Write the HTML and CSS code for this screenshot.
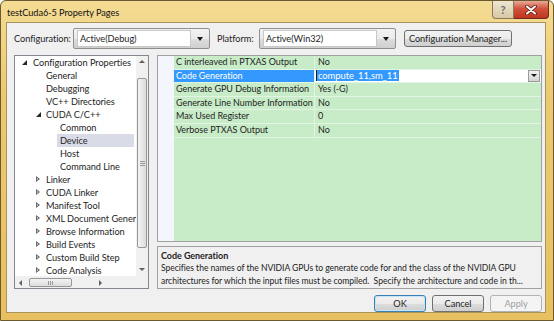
FILE: index.html
```html
<!DOCTYPE html>
<html lang="en">
<head>
  <meta charset="UTF-8">
  <title>testCuda6-5 Property Pages</title>
  <link rel="stylesheet" href="styles.css">
</head>
<body>
  <div class="window">
    <div class="titlebar">
      <span class="title">testCuda6-5 Property Pages</span>
      <div class="caption-btns">
        <div class="cap-help">?</div>
        <div class="cap-close">
          <svg width="14" height="10" viewBox="0 0 14 10"><path d="M3 1.5 L11 8.5 M11 1.5 L3 8.5" stroke="#5a1a10" stroke-width="3.6" stroke-linecap="round"/><path d="M3 1.5 L11 8.5 M11 1.5 L3 8.5" stroke="#fff" stroke-width="2" stroke-linecap="round"/></svg>
        </div>
      </div>
    </div>

    <div class="client">
      <div class="toolbar">
        <span class="lbl">Configuration:</span>
        <div class="combo combo-config"><span>Active(Debug)</span><i class="arrow"></i></div>
        <span class="lbl lbl-platform">Platform:</span>
        <div class="combo combo-platform"><span>Active(Win32)</span><i class="arrow"></i></div>
        <div class="btn btn-manager">Configuration Manager...</div>
      </div>

      <div class="main">
        <div class="tree">
          <div class="tree-body">
            <ul class="tree-list">
              <li class="lv0"><i class="exp"></i>Configuration Properties</li>
              <li class="lv1">General</li>
              <li class="lv1">Debugging</li>
              <li class="lv1">VC++ Directories</li>
              <li class="lv1 node"><i class="exp"></i>CUDA C/C++</li>
              <li class="lv2">Common</li>
              <li class="lv2 sel">Device</li>
              <li class="lv2">Host</li>
              <li class="lv2">Command Line</li>
              <li class="lv1 node"><i class="col"></i>Linker</li>
              <li class="lv1 node"><i class="col"></i>CUDA Linker</li>
              <li class="lv1 node"><i class="col"></i>Manifest Tool</li>
              <li class="lv1 node"><i class="col"></i>XML Document Generator Tool</li>
              <li class="lv1 node"><i class="col"></i>Browse Information</li>
              <li class="lv1 node"><i class="col"></i>Build Events</li>
              <li class="lv1 node"><i class="col"></i>Custom Build Step</li>
              <li class="lv1 node"><i class="col"></i>Code Analysis</li>
            </ul>
            <div class="vscroll">
              <div class="sb-arrow up"></div>
              <div class="vtrack"><div class="vthumb"><span class="grip"></span></div></div>
              <div class="sb-arrow down"></div>
            </div>
          </div>
          <div class="hscroll">
            <div class="sb-arrow left"></div>
            <div class="htrack"><div class="hthumb"><span class="hgrip"></span></div></div>
            <div class="sb-arrow right"></div>
            <div class="corner"></div>
          </div>
        </div>

        <div class="right">
          <div class="grid">
            <div class="margin"></div>
            <div class="rows">
              <div class="row"><div class="name">C interleaved in PTXAS Output</div><div class="val">No</div></div>
              <div class="row sel"><div class="name">Code Generation</div><div class="val edit"><span class="hl">compute_11,sm_11</span><div class="drop"><i class="arrow"></i></div></div></div>
              <div class="row"><div class="name">Generate GPU Debug Information</div><div class="val">Yes (-G)</div></div>
              <div class="row"><div class="name">Generate Line Number Information</div><div class="val">No</div></div>
              <div class="row"><div class="name">Max Used Register</div><div class="val">0</div></div>
              <div class="row"><div class="name">Verbose PTXAS Output</div><div class="val">No</div></div>
            </div>
          </div>
          <div class="desc">
            <div class="desc-title">Code Generation</div>
            <div class="desc-text">Specifies the names of the NVIDIA GPUs to generate code for and the class of the NVIDIA GPU</div>
            <div class="desc-text">architectures for which the input files must be compiled.&nbsp; Specify the architecture and code in th...</div>
          </div>
        </div>
      </div>

      <div class="buttons">
        <div class="btn btn-ok">OK</div>
        <div class="btn">Cancel</div>
        <div class="btn disabled">Apply</div>
      </div>
    </div>
  </div>
</body>
</html>
```

FILE: styles.css
```css
* {
  margin: 0;
  padding: 0;
  box-sizing: border-box;
}

body {
  font-family: Lato, "Open Sans", sans-serif;
  font-size: 9px;
  letter-spacing: -0.05px;
  color: #1e1e1e;
  background: #fff;
}

.window {
  width: 554px;
  height: 321px;
  background: linear-gradient(180deg, #f4dc94 0%, #ecc970 30%, #e8c060 100%);
  border: 1px solid #6b5a2e;
  border-radius: 6px 6px 0 0;
  padding: 0 7px 7px 5px;
  display: flex;
  flex-direction: column;
}

.titlebar {
  height: 21px;
  display: flex;
  align-items: flex-start;
  justify-content: space-between;
}

.title {
  padding: 6px 0 0 1px;
  font-size: 9.2px;
  color: #111;
}

.caption-btns {
  display: flex;
  margin-right: -3px;
}

.cap-help {
  width: 22px;
  height: 18px;
  border: 1px solid #8a7a5a;
  border-top: none;
  border-radius: 0 0 0 4px;
  background: linear-gradient(180deg, #efe6d0, #d6c8a4);
  color: #6a6a6a;
  font-weight: bold;
  font-size: 11px;
  text-align: center;
  line-height: 17px;
}

.cap-close {
  width: 35px;
  height: 18px;
  border: 1px solid #6e2a20;
  border-top: none;
  border-left: none;
  border-radius: 0 0 4px 0;
  background: linear-gradient(180deg, #e9a99a 0%, #d0523c 45%, #c0361f 100%);
  display: flex;
  justify-content: center;
  align-items: center;
}

.client {
  flex: 1;
  background: #f0f0f0;
  border: 1px solid #a8945c;
  display: flex;
  flex-direction: column;
  padding: 5px 3px 0 7px;
}

.toolbar {
  display: flex;
  align-items: center;
  height: 21px;
}

.lbl {
  width: 59px;
  font-size: 9.2px;
}

.lbl-platform {
  width: 42px;
  margin-left: 7px;
}

.combo {
  height: 21px;
  border: 1px solid #8f8f8f;
  border-radius: 2px;
  background: linear-gradient(180deg, #f2f2f2 0%, #ebebeb 50%, #dddddd 51%, #cfcfcf 100%);
  display: flex;
  align-items: center;
  justify-content: space-between;
  padding: 0 6px 0 3px;
  font-size: 9.2px;
}

.combo span {
  background: #fff;
  border: 1px solid #c8c8c8;
  padding: 0 2px;
  line-height: 15px;
  flex: 1;
  margin-right: 6px;
}

.combo-config {
  width: 137px;
}

.combo-platform {
  width: 137px;
}

.arrow {
  display: block;
  width: 0;
  height: 0;
  border-left: 3.5px solid transparent;
  border-right: 3.5px solid transparent;
  border-top: 4px solid #1a1a1a;
}

.btn {
  height: 17px;
  border: 1px solid #707070;
  border-radius: 3px;
  background: linear-gradient(180deg, #f2f2f2 0%, #ebebeb 50%, #dddddd 51%, #cfcfcf 100%);
  display: flex;
  align-items: center;
  justify-content: center;
  width: 52px;
  font-size: 9.2px;
}

.btn-manager {
  width: 108px;
  margin-left: 8px;
}

.main {
  display: flex;
  margin-top: 6px;
  height: 234px;
  gap: 8px;
}

.tree {
  width: 135px;
  border: 1px solid #828790;
  background: #fff;
  display: flex;
  flex-direction: column;
}

.tree-body {
  flex: 1;
  display: flex;
  overflow: hidden;
}

.tree-list {
  list-style: none;
  flex: 1;
  overflow: hidden;
  white-space: nowrap;
  font-size: 9.2px;
}

.tree-list li {
  height: 13px;
  line-height: 13px;
  position: relative;
}

.lv0 {
  padding-left: 18px;
}

.lv1 {
  padding-left: 31px;
}

.lv2 {
  padding-left: 45px;
}

.tree-list li.sel {
  background: #d9dce6;
  margin-left: 42px;
  padding-left: 3px;
  margin-right: 2px;
}

.exp, .col {
  position: absolute;
  top: 4px;
}

.lv0 .exp {
  left: 7px;
}

.lv1 .exp, .lv1 .col {
  left: 21px;
}

.exp {
  width: 0;
  height: 0;
  border-left: 5px solid transparent;
  border-bottom: 5px solid #262626;
}

.col {
  width: 0;
  height: 0;
  border-top: 3.5px solid transparent;
  border-bottom: 3.5px solid transparent;
  border-left: 4px solid #6a6a6a;
  top: 3px;
}

.col::after {
  content: "";
  position: absolute;
  left: -3px;
  top: -1.5px;
  border-top: 1.5px solid transparent;
  border-bottom: 1.5px solid transparent;
  border-left: 1.8px solid #fff;
}

.vscroll {
  width: 12px;
  background: #f0f0f0;
  display: flex;
  flex-direction: column;
}

.sb-arrow {
  width: 12px;
  height: 12px;
  position: relative;
  flex-shrink: 0;
}

.sb-arrow::after {
  content: "";
  position: absolute;
  left: 3px;
  top: 4px;
  border-left: 3px solid transparent;
  border-right: 3px solid transparent;
}

.sb-arrow.up::after {
  border-bottom: 3px solid #606060;
}

.sb-arrow.down::after {
  border-top: 3px solid #606060;
}

.sb-arrow.left::after {
  border: none;
  left: 4px;
  top: 3px;
  border-top: 3px solid transparent;
  border-bottom: 3px solid transparent;
  border-right: 3px solid #606060;
}

.sb-arrow.right::after {
  border: none;
  left: 5px;
  top: 3px;
  border-top: 3px solid transparent;
  border-bottom: 3px solid transparent;
  border-left: 3px solid #606060;
}

.vtrack {
  flex: 1;
  padding-top: 10px;
  padding-bottom: 16px;
  display: flex;
}

.vthumb {
  flex: 1;
  margin: 0 1px;
  border: 1px solid #989898;
  border-radius: 2px;
  background: linear-gradient(90deg, #f4f4f4, #dcdcdc);
  display: flex;
  align-items: center;
  justify-content: center;
}

.grip {
  width: 5px;
  height: 5px;
  border-top: 1px solid #999;
  border-bottom: 1px solid #999;
  background: linear-gradient(180deg, transparent 1px, #999 1px, #999 2px, transparent 2px);
}

.hscroll {
  height: 12px;
  background: #f0f0f0;
  display: flex;
  border-top: 1px solid #f0f0f0;
}

.htrack {
  flex: 1;
  display: flex;
  padding: 0 22px 0 2px;
}

.hthumb {
  flex: 1;
  border: 1px solid #989898;
  border-radius: 2px;
  background: linear-gradient(180deg, #f4f4f4, #dcdcdc);
  display: flex;
  align-items: center;
  justify-content: center;
  margin: 1px 0;
}

.hgrip {
  width: 5px;
  height: 4px;
  border-left: 1px solid #999;
  border-right: 1px solid #999;
  background: linear-gradient(90deg, transparent 1px, #999 1px, #999 2px, transparent 2px);
}

.corner {
  width: 12px;
}

.right {
  flex: 1;
  display: flex;
  flex-direction: column;
  gap: 4px;
}

.grid {
  flex: 1;
  display: flex;
  border: 1px solid #a0a0a0;
  background: #c8ecc8;
}

.margin {
  width: 16px;
  background: #f3f6fc;
}

.rows {
  flex: 1;
}

.row {
  display: flex;
  height: 13.6px;
  border-bottom: 1px solid #e2f5e2;
  line-height: 12.6px;
}

.name {
  width: 141px;
  padding-left: 2px;
  border-right: 1px solid #e2f5e2;
  white-space: nowrap;
  overflow: hidden;
}

.val {
  flex: 1;
  padding-left: 3px;
}

.row.sel .name {
  background: #3399ff;
  color: #fff;
}

.val.edit {
  background: #fff;
  display: flex;
  justify-content: space-between;
  align-items: center;
  padding-left: 1px;
}

.hl {
  background: #3399ff;
  color: #fff;
  font-size: 9.4px;
  line-height: 11px;
  padding: 0 1px;
  border-left: 1px solid #1a1a1a;
}

.drop {
  width: 12px;
  height: 12px;
  border: 1px solid #9a9a9a;
  background: linear-gradient(180deg, #f2f2f2, #d4d4d4);
  display: flex;
  align-items: center;
  justify-content: center;
  margin-right: 1px;
}

.drop .arrow {
  border-left-width: 3px;
  border-right-width: 3px;
  border-top-width: 3px;
}

.desc {
  height: 43px;
  border: 1px solid #a0a0a0;
  padding: 2px 3px;
  line-height: 13px;
}

.desc-title {
  font-weight: bold;
}

.desc-text {
  font-size: 8.6px;
  white-space: nowrap;
  overflow: hidden;
}

.buttons {
  display: flex;
  justify-content: flex-end;
  gap: 6px;
  padding: 6px 0 0 0;
}

.btn-ok {
  border-color: #3c7fb1;
  box-shadow: inset 0 0 0 1px #c4e5f6;
}

.btn.disabled {
  color: #a0a0a0;
  border-color: #adb2b5;
  background: #f4f4f4;
}
```
